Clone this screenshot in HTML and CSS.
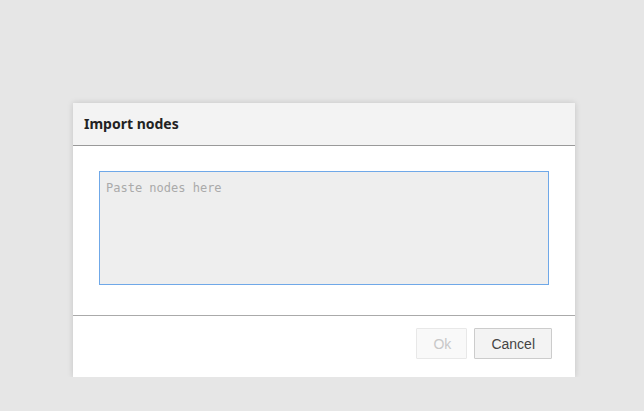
FILE: index.html
```html
<!DOCTYPE html>
<html lang="en">
<head>
  <meta charset="utf-8" />
  <title>Import nodes</title>
  <link rel="stylesheet" href="styles.css">
</head>
<body>
  <div class="dialog">
    <div class="dialog-header">Import nodes</div>
    <div class="dialog-body">
      <textarea class="import-text" placeholder="Paste nodes here"></textarea>
    </div>
    <div class="dialog-footer">
      <button type="button" class="btn" disabled>Ok</button>
      <button type="button" class="btn">Cancel</button>
    </div>
  </div>
</body>
</html>
```

FILE: styles.css
```css
body {
  margin: 0;
  background-color: #e6e6e6;
  font-family: 'Noto Sans', sans-serif;
  color: #222;
}
.dialog {
  width: 502px;
  margin: 103px 0 0 73px;
  background-color: #fff;
  box-shadow: 0 0 6px rgba(0, 0, 0, 0.15);
}
.dialog-header {
  height: 43px;
  line-height: 42px;
  padding: 0 11px;
  background-color: #f3f3f3;
  border-bottom: 1px solid #999;
  font-size: 14px;
  font-weight: bold;
  box-sizing: border-box;
}
.dialog-body {
  padding: 25px 26px 30px 26px;
  border-bottom: 1px solid #aaa;
}
.import-text {
  display: block;
  width: 450px;
  height: 114px;
  box-sizing: border-box;
  margin: 0;
  padding: 9px 6px;
  background-color: #eee;
  border: 1px solid #6fa8e8;
  font-family: 'DejaVu Sans Mono', monospace;
  font-size: 12px;
  resize: none;
  outline: none;
}
.import-text::placeholder {
  color: #aaa;
}
.dialog-footer {
  display: flex;
  justify-content: flex-end;
  gap: 7px;
  padding: 12px 23px 18px 0;
}
.btn {
  height: 31px;
  padding: 0 16px;
  background-color: #f3f3f3;
  border: 1px solid #ccc;
  border-radius: 1px;
  font-family: 'Liberation Sans', Arial, sans-serif;
  font-size: 14px;
  color: #444;
}
.btn:disabled {
  width: 51px;
  background-color: #f9f9f9;
  border-color: #e8e8e8;
  color: #c8c8c8;
}
```
